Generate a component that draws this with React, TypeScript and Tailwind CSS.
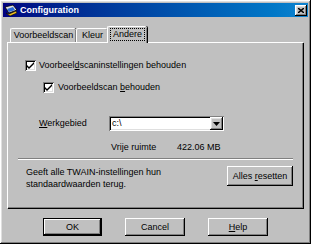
import { ReactNode } from "react";

const raised =
  "shadow-[inset_-1px_-1px_#000,inset_1px_1px_#fff,inset_-2px_-2px_#808080,inset_2px_2px_#dfdfdf]";

const Checkbox = () => (
  <span className="flex h-[11px] w-[11px] items-center justify-center bg-white shadow-[inset_1px_1px_#808080,inset_-1px_-1px_#fff,inset_2px_2px_#000,inset_-2px_-2px_#dfdfdf]">
    <svg width="7" height="7" viewBox="0 0 7 7">
      <path d="M0 3 L2 5 L7 0 L7 2 L2 7 L0 5 Z" fill="#000" />
    </svg>
  </span>
);

const Button = ({
  children,
  className = "",
  isDefault = false,
}: {
  children: ReactNode;
  className?: string;
  isDefault?: boolean;
}) => (
  <div
    className={`flex items-center justify-center bg-[#c0c0c0] ${
      isDefault
        ? "border border-black shadow-[inset_-1px_-1px_#000,inset_1px_1px_#fff,inset_-2px_-2px_#808080]"
        : "shadow-[inset_-1px_-1px_#000,inset_1px_1px_#fff,inset_-2px_-2px_#808080]"
    } ${className}`}
  >
    {children}
  </div>
);

const Tab = ({ label, width }: { label: string; width: string }) => (
  <div
    className={`flex h-[14px] items-center justify-center rounded-t-[2px] border-l border-t border-white bg-[#c0c0c0] shadow-[inset_-1px_0_#808080,1px_0_#000] ${width}`}
  >
    {label}
  </div>
);

export default function App() {
  return (
    <div
      className={`flex h-[244px] w-[311px] flex-col bg-[#c0c0c0] p-[3px] text-[9px] leading-none text-black ${raised}`}
      style={{ fontFamily: '"Liberation Sans", Arial, sans-serif' }}
    >
      {/* title bar */}
      <div className="flex h-[14px] items-center bg-gradient-to-r from-[#000080] to-[#1084d0] pl-[1px] pr-[1px]">
        <svg width="14" height="13" viewBox="0 0 14 13">
          <path d="M1 3 L9 1 L13 6 L5 9 Z" fill="#e0e0e0" stroke="#000" strokeWidth="0.8" />
          <path d="M3 5 L9 3 L11 6 L5 8 Z" fill="#2a6bd8" />
          <path d="M2 9 L6 12 L13 9 L12 7 L5 10 Z" fill="#f0c020" stroke="#000" strokeWidth="0.6" />
        </svg>
        <span className="ml-[2px] text-[9px] font-bold text-white">Configuration</span>
        <div
          className={`ml-auto flex h-[11px] w-[12px] items-center justify-center bg-[#c0c0c0] ${raised}`}
        >
          <svg width="6" height="5" viewBox="0 0 6 5">
            <path d="M0 0 L6 5 M6 0 L0 5" stroke="#000" strokeWidth="1.4" />
          </svg>
        </div>
      </div>

      {/* tabs */}
      <div className="ml-[4px] mt-[9px] flex flex-col">
        <div className="relative z-10 flex items-end pl-[3px]">
          <Tab label="Voorbeeldscan" width="w-[66px]" />
          <Tab label="Kleur" width="w-[32px]" />
          <div className="-mb-px -ml-[1px] flex h-[17px] w-[40px] items-center justify-center rounded-t-[2px] border-l border-t border-white bg-[#c0c0c0] pb-[2px] shadow-[inset_-1px_0_#808080,1px_0_#000]">
            <span className="border border-dotted border-black px-[2px] py-[1px]">Andere</span>
          </div>
        </div>

        {/* panel */}
        <div className="flex h-[166px] w-[296px] flex-col border-l border-t border-white shadow-[inset_-1px_-1px_#808080,1px_1px_#000]">
          <div className="ml-[17px] mt-[17px] flex items-center gap-[3px]">
            <Checkbox />
            <span>
              Voorbeel<span className="underline">d</span>scaninstellingen behouden
            </span>
          </div>
          <div className="ml-[35px] mt-[11px] flex items-center gap-[4px]">
            <Checkbox />
            <span>
              Voorbeeldscan <span className="underline">b</span>ehouden
            </span>
          </div>

          <div className="ml-[31px] mt-[23px] flex items-center">
            <span className="w-[70px]">
              <span className="underline">W</span>erkgebied
            </span>
            <div className="flex h-[15px] w-[115px] items-center bg-white pl-[3px] shadow-[inset_1px_1px_#808080,inset_-1px_-1px_#fff,inset_2px_2px_#000,inset_-2px_-2px_#dfdfdf]">
              <span>c:\</span>
              <div
                className={`ml-auto mr-[1px] flex h-[13px] w-[13px] items-center justify-center bg-[#c0c0c0] ${raised}`}
              >
                <svg width="7" height="4" viewBox="0 0 7 4">
                  <path d="M0 0 H7 L3.5 4 Z" fill="#000" />
                </svg>
              </div>
            </div>
          </div>

          <div className="ml-[103px] mt-[12px] flex">
            <span className="w-[66px]">Vrije ruimte</span>
            <span>422.06 MB</span>
          </div>

          <div className="mx-[10px] mt-[6px] h-[2px] border-t border-[#808080] border-b-white" style={{ borderBottomWidth: 1 }} />

          <div className="ml-[18px] mr-[10px] mt-[6px] flex items-start justify-between">
            <div className="mt-[2px] flex flex-col gap-[3px] leading-[9px]">
              <span>Geeft alle TWAIN-instellingen hun</span>
              <span>standaardwaarden terug.</span>
            </div>
            <Button className="h-[20px] w-[66px]">
              <span>
                Alles <span className="underline">r</span>esetten
              </span>
            </Button>
          </div>
        </div>
      </div>

      {/* dialog buttons */}
      <div className="ml-[40px] mt-[10px] flex gap-[23px]">
        <Button isDefault className="h-[18px] w-[59px]">
          OK
        </Button>
        <Button className="h-[18px] w-[60px]">Cancel</Button>
        <Button className="h-[18px] w-[60px]">
          <span>
            <span className="underline">H</span>elp
          </span>
        </Button>
      </div>
    </div>
  );
}
